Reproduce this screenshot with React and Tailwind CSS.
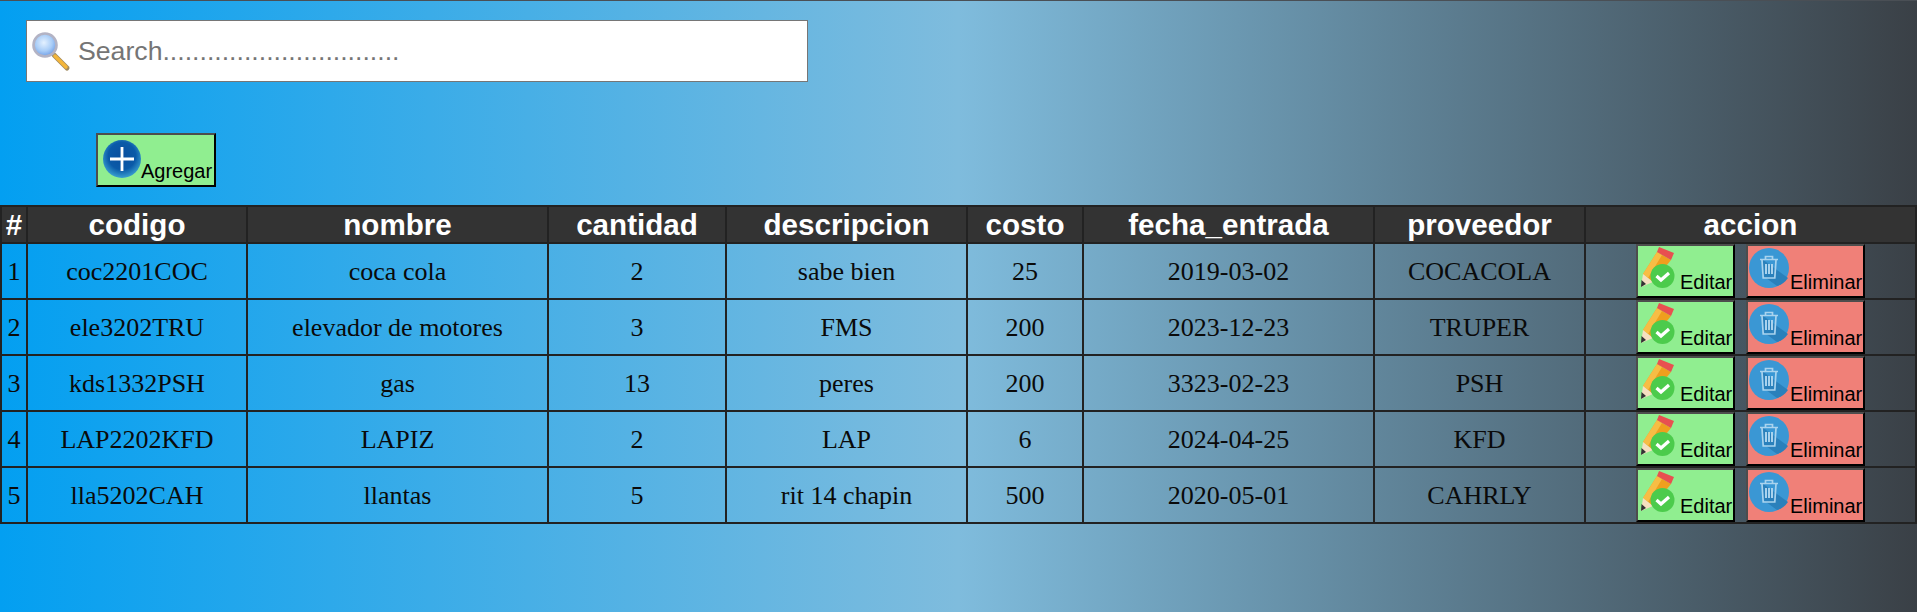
import React from 'react'

const rows = [
  ['1', 'coc2201COC', 'coca cola', '2', 'sabe bien', '25', '2019-03-02', 'COCACOLA'],
  ['2', 'ele3202TRU', 'elevador de motores', '3', 'FMS', '200', '2023-12-23', 'TRUPER'],
  ['3', 'kds1332PSH', 'gas', '13', 'peres', '200', '3323-02-23', 'PSH'],
  ['4', 'LAP2202KFD', 'LAPIZ', '2', 'LAP', '6', '2024-04-25', 'KFD'],
  ['5', 'lla5202CAH', 'llantas', '5', 'rit 14 chapin', '500', '2020-05-01', 'CAHRLY'],
]

const headers = [
  ['#', 'w-[26px]'],
  ['codigo', 'w-[220px]'],
  ['nombre', 'w-[301px]'],
  ['cantidad', 'w-[178px]'],
  ['descripcion', 'w-[241px]'],
  ['costo', 'w-[116px]'],
  ['fecha_entrada', 'w-[291px]'],
  ['proveedor', 'w-[211px]'],
  ['accion', ''],
]

const SearchIcon = () => (
  <svg width="42" height="42" viewBox="0 0 42 42" className="shrink-0">
    <defs>
      <radialGradient id="lens" cx="45%" cy="40%" r="60%">
        <stop offset="0%" stopColor="#e4f1ff" />
        <stop offset="60%" stopColor="#a9cdf7" />
        <stop offset="100%" stopColor="#6f9fe8" />
      </radialGradient>
    </defs>
    <line x1="24" y1="25" x2="37" y2="38" stroke="#a08a60" strokeWidth="5" strokeLinecap="round" />
    <line x1="25" y1="26" x2="36" y2="37" stroke="#f4b63a" strokeWidth="3.5" strokeLinecap="round" />
    <circle cx="15" cy="15" r="11.5" fill="url(#lens)" stroke="#b3b3c4" strokeWidth="2.6" />
  </svg>
)

const PlusIcon = () => (
  <svg width="38" height="38" viewBox="0 0 38 38" className="shrink-0">
    <defs>
      <radialGradient id="plusbg" cx="50%" cy="42%" r="58%">
        <stop offset="0%" stopColor="#0a4f9e" />
        <stop offset="62%" stopColor="#0a5aa8" />
        <stop offset="100%" stopColor="#3a9fd0" />
      </radialGradient>
    </defs>
    <circle cx="19" cy="19" r="19" fill="url(#plusbg)" />
    <path d="M19 7v24M7 19h24" stroke="#fff" strokeWidth="2.8" />
  </svg>
)

const PencilIcon = () => (
  <svg width="40" height="42" viewBox="0 0 40 42" className="shrink-0">
    <path d="M18 5 L32 13 L14 35 L4 27 Z" fill="#ef9f1e" />
    <path d="M18 5 L23 8 L9 31 L4 27 Z" fill="#f7bd45" />
    <path d="M20 0 L35 6 L32 13 L18 5 Z" fill="#e85050" />
    <path d="M4 27 L14 35 L2 40 Z" fill="#f5dfc0" />
    <path d="M2.5 33 L7 37 L2 40 Z" fill="#333" />
    <circle cx="23.5" cy="29" r="12" fill="#4ccb4c" />
    <path d="M17.5 29 L22 33 L30 26" fill="none" stroke="#fff" strokeWidth="3.2" />
  </svg>
)

const TrashIcon = () => (
  <svg width="40" height="40" viewBox="0 0 40 40" className="shrink-0">
    <circle cx="20" cy="20" r="20" fill="#3a97d4" />
    <path d="M13 11 L39 30 A20 20 0 0 1 28 38 L13 27 Z" fill="#2a80bb" />
    <g fill="none" stroke="#a9d3ee" strokeWidth="1.7">
      <path d="M11 11.5h18M16.5 11v-2.5h7V11M13 12l1.2 18h11.6L27 12" />
      <path d="M17 16v10M20 16v10M23 16v10" strokeWidth="2" />
    </g>
  </svg>
)

const Btn = ({ color, width, icon, label }) => (
  <button
    className={`${color} ${width} h-[54px] flex items-end pl-[1px] pb-[2px] border-2 border-t-[#4d4d4d] border-l-[#4d4d4d] border-r-black border-b-black text-[20px] leading-[23px] text-black font-['Liberation_Sans',sans-serif]`}
  >
    {icon}
    <span className="whitespace-nowrap ml-[1px]">{label}</span>
  </button>
)

export default function App() {
  return (
    <div className="min-h-[612px] border-t border-[#4a4f55] bg-[linear-gradient(90deg,#039ff1_0%,#7fbcdd_50%,#3a4046_100%)] font-['Liberation_Serif',serif]">
      <div className="ml-[26px] mt-[19px] w-[782px] h-[62px] flex items-center bg-white border border-[#767676] pl-[3px]">
        <SearchIcon />
        <input
          placeholder="Search................................"
          className="flex-1 ml-[6px] pt-[2px] text-[26.67px] font-['Liberation_Sans',sans-serif] outline-none placeholder:text-[#757575]"
        />
      </div>

      <button className="ml-[96px] mt-[51px] w-[120px] h-[54px] flex items-end pl-[5px] bg-[#90ee90] border-2 border-t-[#4d4d4d] border-l-[#4d4d4d] border-r-black border-b-black text-[20px] leading-[23px] text-black font-['Liberation_Sans',sans-serif]">
        <span className="self-center mb-[3px]"><PlusIcon /></span>
        <span className="mb-[2px]">Agregar</span>
      </button>

      <table className="mt-[18px] w-full table-fixed border-collapse">
        <thead>
          <tr className="h-[37px] bg-[#333333] text-white text-[29.6px] font-bold font-['Liberation_Sans',sans-serif]">
            {headers.map(([h, w]) => (
              <th key={h} className={`${w} border-2 border-[#222222] p-0 leading-none`}>{h}</th>
            ))}
          </tr>
        </thead>
        <tbody>
          {rows.map((r) => (
            <tr key={r[0]} className="h-[56px] text-[26px] text-[#0a0a0a]">
              {r.map((c, i) => (
                <td key={i} className="border-2 border-[#222222] p-0 text-center">{c}</td>
              ))}
              <td className="border-2 border-[#222222] p-0">
                <div className="flex justify-center gap-[11px]">
                  <Btn color="bg-[#90ee90]" width="w-[99px]" icon={<span className="self-start mt-[1px]"><PencilIcon /></span>} label="Editar" />
                  <Btn color="bg-[#f08078]" width="w-[119px]" icon={<span className="self-start mt-[2px]"><TrashIcon /></span>} label="Eliminar" />
                </div>
              </td>
            </tr>
          ))}
        </tbody>
      </table>
    </div>
  )
}
